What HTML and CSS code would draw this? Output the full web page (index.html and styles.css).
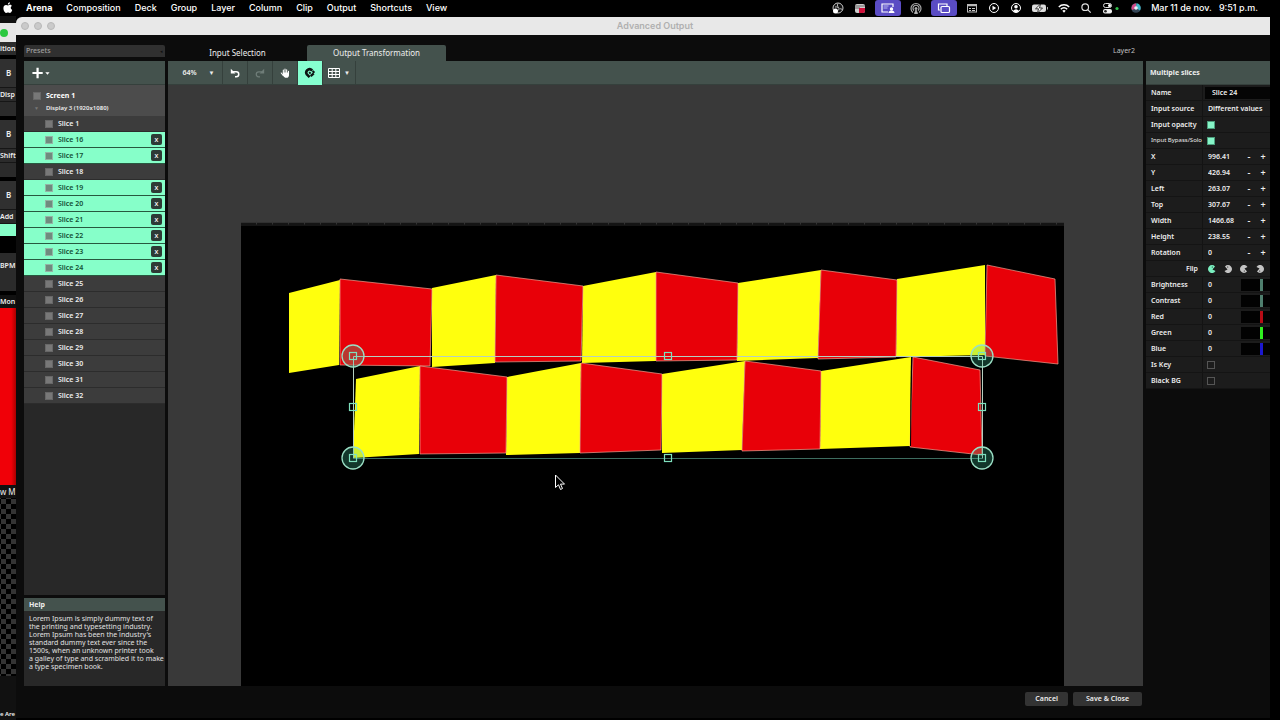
FILE: index.html
```html
<!DOCTYPE html>
<html lang="en">
<head>
    <meta charset="UTF-8">
    <meta name="viewport" content="width=device-width, initial-scale=1.0">
    <title>Advanced Output</title>
    <link rel="stylesheet" href="styles.css">
</head>
<body>
    <header class="menubar">
        <svg class="apple" viewBox="0 0 10 12" aria-hidden="true"><path fill="#fff" d="M6.9.2c.1 1.2-.9 2.4-2 2.4C4.700 1.500 5.800.4 6.900.2zM8.700 4c-1.500 1-1.300 3.100.5 3.900C8.700 9.500 7.700 11 6.700 11c-.7 0-.9-.4-1.700-.4s-1 .4-1.700.4C1.900 11 .4 8.300.4 6.200c0-2.200 1.300-3.300 2.600-3.300.9 0 1.500.5 2.100.5.500 0 1.200-.6 2.200-.6.700 0 1.300.4 1.400 1.200z"/></svg>
        <nav class="menus">
            <a href="#" class="app">Arena</a>
            <a href="#">Composition</a>
            <a href="#">Deck</a>
            <a href="#">Group</a>
            <a href="#">Layer</a>
            <a href="#">Column</a>
            <a href="#">Clip</a>
            <a href="#">Output</a>
            <a href="#">Shortcuts</a>
            <a href="#">View</a>
        </nav>
        <div class="status">
            <svg viewBox="0 0 14 14"><circle cx="7" cy="7" r="5" fill="#111" stroke="#ccc"/><path d="M7 2.500c-1.500 2 0 3.500 1 4.500M11.500 8.500C9 7 7.500 8 7 9.500M4 6c2-.5 3 .5 3.500 1.500" fill="none" stroke="#bbb"/><circle cx="4.500" cy="10" r="2.500" fill="#fff"/></svg>
            <svg viewBox="0 0 14 14"><rect x="2" y="3" width="10" height="9" rx="2" fill="#ccc"/><path d="M2 5h10M2 7h5" stroke="#666"/><path d="M6 7h6v3q0 2-2 2H6z" fill="#d0103a"/></svg>
            <span class="pill"><svg viewBox="0 0 14 14"><path d="M7 11H1V3h11v3" fill="none" stroke="#fff" stroke-width="1.200"/><path d="M2.500 5h5M2.500 7h4" stroke="#b9b4f0"/><circle cx="10.500" cy="8" r="1.700" fill="#fff"/><path d="M7.500 12q0-2.500 3-2.500t3 2.500z" fill="#fff"/></svg></span>
            <svg viewBox="0 0 14 14" fill="none" stroke="#aaa"><path d="M4 11.500a5 5 0 1 1 6 0M5 9.500a3 3 0 1 1 4 0" stroke-width="1.200"/><circle cx="7" cy="7.500" r="1" fill="#ccc"/><path d="M5.500 12.500 7 9l1.500 3.500z" fill="#bbb"/></svg>
            <span class="pill"><svg viewBox="0 0 14 14" fill="none" stroke="#fff" stroke-width="1.200"><path d="M3 9H1.500V3H10v2"/><rect x="4" y="5.500" width="8.500" height="6" rx="1"/></svg></span>
            <svg viewBox="0 0 14 14"><rect x="2.500" y="3.500" width="9" height="7.500" fill="none" stroke="#bbb"/><path d="M2.500 4.500h9" stroke="#bbb" stroke-width="1.500"/><path d="M4 7.500h2M7 7.500h3M4 9.500h2M7 9.500h3" stroke="#ccc"/></svg>
            <svg viewBox="0 0 14 14"><circle cx="7" cy="7" r="4.500" fill="none" stroke="#fff"/><path d="M5.500 4.800v4.400L9.200 7z" fill="#fff"/></svg>
            <svg viewBox="0 0 14 14"><circle cx="7" cy="7" r="4.500" fill="none" stroke="#fff"/><circle cx="7" cy="5.700" r="1.800" fill="#fff"/><path d="M3.800 10q3.200-3.500 6.400 0-3.200 2.700-6.400 0z" fill="#fff"/></svg>
            <svg class="battery" viewBox="0 0 18 14"><rect x="1" y="3.500" width="14" height="7.500" rx="2" fill="#ddd"/><path d="M16.500 6v2.500" stroke="#aaa"/><path d="M9.500 3 4.500 7.800h3L6.500 12l5-5h-3z" fill="#fff" stroke="#111" stroke-width=".8"/></svg>
            <svg viewBox="0 0 14 14" fill="none" stroke="#fff" stroke-width="1.500"><path d="M1.800 6a7.300 7.300 0 0 1 10.400 0M3.800 8.200a4.500 4.500 0 0 1 6.400 0"/><path d="m5.300 9.700 1.700 2 1.700-2q-1.700-1.200-3.400 0z" fill="#fff" stroke="none"/></svg>
            <svg viewBox="0 0 14 14" fill="none" stroke="#ddd" stroke-width="1.200"><circle cx="6.200" cy="6.200" r="3.300"/><path d="m8.700 8.700 3 3"/></svg>
            <svg class="control" viewBox="0 0 20 14"><rect x="2.500" y="2.500" width="8" height="4" rx="2" fill="none" stroke="#ddd"/><circle cx="8.500" cy="4.500" r="1.500" fill="#fff"/><rect x="2" y="8" width="9" height="4.500" rx="2" fill="#eee"/><circle cx="4.500" cy="10.200" r="1.300" fill="#222"/><circle cx="16" cy="7.500" r="1.600" fill="#2fbf4a"/></svg>
            <svg viewBox="0 0 14 14"><circle cx="7" cy="7" r="4.800" fill="#345"/><path d="M3 9a4.800 4.800 0 0 1 4-6.800L8 7z" fill="#d24a88"/><path d="M7.500 2.300A4.800 4.800 0 0 1 11 9.500L7 7z" fill="#3fb8c8"/><circle cx="7" cy="7" r="1.800" fill="#e8eef8"/></svg>
            <time>Mar 11 de nov.&nbsp;&nbsp; 9:51 p.m.</time>
        </div>
    </header>

    <div class="desktop">
        <aside class="behind">
            <div class="behind-title"><i class="green-light"></i></div>
            <div class="strip strip-tab">ition</div>
            <div class="strip strip-b">B</div>
            <div class="strip strip-name">Disp</div>
            <div class="strip strip-foot"></div>
            <div class="strip strip-b">B</div>
            <div class="strip strip-name">Shift</div>
            <div class="strip strip-foot"></div>
            <div class="strip strip-b">B</div>
            <div class="strip strip-name">Add</div>
            <div class="strip-mint"></div>
            <div class="strip strip-bpm">BPM</div>
            <div class="strip strip-foot wide"></div>
            <div class="strip strip-mon">Mon</div>
            <div class="strip-red"></div>
            <div class="strip strip-mon thin">w M</div>
            <div class="strip-checker"></div>
            <div class="strip strip-end">e Are</div>
        </aside>

        <main class="window">
            <div class="titlebar">
                <span class="lights"><i></i><i></i><i></i></span>
                <h1>Advanced Output</h1>
            </div>

            <div class="panes">
                <section class="side">
                    <button class="presets">Presets<span>◂</span></button>
                    <div class="bar">
                        <button class="add" aria-label="Add screen">
                            <svg viewBox="0 0 22 14"><path d="M7 1v12M1 7h12" stroke="#fff" stroke-width="2.600"/><path d="M16 6h5l-2.500 3z" fill="#fff"/></svg>
                        </button>
                    </div>
                    <div class="tree">
                        <div class="screen">
                            <label><input type="checkbox" class="mute"> Screen 1</label>
                            <button class="display"><span>▼</span>Display 3 (1920x1080)</button>
                        </div>
                        <ul class="slices">
                            <li><label><input type="checkbox" class="mute">Slice 1</label></li>
                            <li class="on"><label><input type="checkbox" class="mute">Slice 16</label><button>X</button></li>
                            <li class="on"><label><input type="checkbox" class="mute">Slice 17</label><button>X</button></li>
                            <li><label><input type="checkbox" class="mute">Slice 18</label></li>
                            <li class="on"><label><input type="checkbox" class="mute">Slice 19</label><button>X</button></li>
                            <li class="on"><label><input type="checkbox" class="mute">Slice 20</label><button>X</button></li>
                            <li class="on"><label><input type="checkbox" class="mute">Slice 21</label><button>X</button></li>
                            <li class="on"><label><input type="checkbox" class="mute">Slice 22</label><button>X</button></li>
                            <li class="on"><label><input type="checkbox" class="mute">Slice 23</label><button>X</button></li>
                            <li class="on"><label><input type="checkbox" class="mute">Slice 24</label><button>X</button></li>
                            <li><label><input type="checkbox" class="mute">Slice 25</label></li>
                            <li><label><input type="checkbox" class="mute">Slice 26</label></li>
                            <li><label><input type="checkbox" class="mute">Slice 27</label></li>
                            <li><label><input type="checkbox" class="mute">Slice 28</label></li>
                            <li><label><input type="checkbox" class="mute">Slice 29</label></li>
                            <li><label><input type="checkbox" class="mute">Slice 30</label></li>
                            <li><label><input type="checkbox" class="mute">Slice 31</label></li>
                            <li><label><input type="checkbox" class="mute">Slice 32</label></li>
                        </ul>
                    </div>
                    <div class="help">
                        <h2>Help</h2>
                        <p>Lorem Ipsum is simply dummy text of<br>the printing and typesetting industry.<br>Lorem Ipsum has been the industry's<br>standard dummy text ever since the<br>1500s, when an unknown printer took<br>a galley of type and scrambled it to make<br>a type specimen book.</p>
                    </div>
                </section>

                <section class="center">
                    <div class="tabs">
                        <button>Input Selection</button>
                        <button class="active">Output Transformation</button>
                        <span class="layer">Layer2</span>
                    </div>
                    <div class="bar toolbar">
                        <button class="zoom">64%<span>▼</span></button>
                        <button aria-label="Undo"><svg viewBox="0 0 12 12"><path d="M2 4.500h5.500a3 3 0 0 1 0 6H6" fill="none" stroke="#fff" stroke-width="1.800"/><path d="M1 1v5.500h5.500z" fill="#fff"/></svg></button>
                        <button aria-label="Redo"><svg viewBox="0 0 12 12"><path d="M10 4.500H4.500a3 3 0 0 0 0 6H6" fill="none" stroke="#6f7d78" stroke-width="1.500"/><path d="M11 1v5.500H5.500z" fill="#6f7d78"/></svg></button>
                        <button aria-label="Pan"><svg viewBox="0 0 12 12"><path d="M4 6V2.500M6 6V1.200M8 6V2M10.200 7V4M3.800 9 1.500 6" stroke="#fff" stroke-width="1.300" stroke-linecap="round"/><path d="M3.400 5.500h7.400V8q0 3.700-3 3.700H6.200Q4.500 11 3.300 8.500z" fill="#fff"/></svg></button>
                        <button class="snap" aria-label="Snap"><svg viewBox="0 0 12 12"><path d="M5.600 10.200 2.900 7.500A3.300 3.300 0 0 1 7.500 2.900L8.300 3.700" fill="none" stroke="#0d1512" stroke-width="2.600"/><path d="m8.600 4 1.800 1.800M5.200 6.600 6.600 5.300" stroke="#0d1512" stroke-width="2"/><path d="m6.700 9.100 3-2.700" stroke="#0d1512" stroke-width="2.400"/></svg></button>
                        <button class="grid-tool" aria-label="Grid"><svg viewBox="0 0 12 12"><path d="M.5 1.500h11v9H.5zM.5 4.500h11M.5 7.500h11M4.200 1.500v9M7.800 1.500v9" fill="none" stroke="#fff"/></svg><span>▼</span></button>
                    </div>
                    <svg class="stage" viewBox="168 85 975 601" preserveAspectRatio="xMidYMin slice">
                        <rect x="241" y="224" width="823" height="470" fill="#000"/>
                        <path d="M241 222.500h823" stroke="#303030"/>
                        <path d="M241 224.500h823" stroke="#141414" stroke-width="3"/>
                        <path d="M256 223h808" stroke="#343434" stroke-width="3" stroke-dasharray="1 15"/>
                        <g fill="#ffff0d">
                            <path d="M289 293 340 280 339 365 289 373z"/>
                            <path d="M432 288 496 275 495 363 432 367z"/>
                            <path d="M583 286 656 272 656 361 582 363z"/>
                            <path d="M738 283 821 270 818 358 737 361z"/>
                            <path d="M897 279 985 265 985 355 896 357z"/>
                            <path d="M356 379 420 366 419 454 353 458z"/>
                            <path d="M507 377 581 363 580 453 506 455z"/>
                            <path d="M662 374 745 361 742 450 662 453z"/>
                            <path d="M821 371 911 357 910 446 820 449z"/>
                        </g>
                        <g fill="#e80008" stroke="#f2a090" stroke-width=".7">
                            <path d="M340 279 432 289 430 366 340 365z"/>
                            <path d="M496 275 583 286 581 361 495 362z"/>
                            <path d="M656 272 738 283 737 360 656 361z"/>
                            <path d="M821 270 897 280 896 357 818 359z"/>
                            <path d="M987 265 1055 279 1058 364 985 356z"/>
                            <path d="M420 366 507 377 506 453 420 454z"/>
                            <path d="M581 363 662 374 661 450 580 453z"/>
                            <path d="M745 361 821 371 820 449 742 451z"/>
                            <path d="M913 357 980 370 982 455 910 447z"/>
                        </g>
                        <path d="M911.500 357.500 910.500 446" stroke="#000"/>
                        <path d="M353.500 458.500v-102h629v102" fill="none" stroke="#b5cfc0"/>
                        <path d="M353.500 458.500h629" stroke="#3d6d60"/>
                        <g fill="#41c79a" fill-opacity=".28" stroke="#9adfc5" stroke-width="1.300">
                            <circle cx="353" cy="356" r="11"/>
                            <circle cx="982" cy="356" r="11"/>
                            <circle cx="353" cy="458" r="11"/>
                            <circle cx="982" cy="458" r="11"/>
                        </g>
                        <g fill="none" stroke="#7ee0bd" stroke-width="1.200">
                            <rect x="349.500" y="352.500" width="7" height="7"/>
                            <rect x="664.500" y="352.500" width="7" height="7"/>
                            <rect x="978.500" y="352.500" width="7" height="7"/>
                            <rect x="349.500" y="403.500" width="7" height="7"/>
                            <rect x="978.500" y="403.500" width="7" height="7"/>
                            <rect x="349.500" y="454.500" width="7" height="7"/>
                            <rect x="664.500" y="454.500" width="7" height="7"/>
                            <rect x="978.500" y="454.500" width="7" height="7"/>
                        </g>
                        <path d="M555.500 475v12.500l3-2.700 2 4.700 2-1-2-4.400h4z" fill="#000" stroke="#fff"/>
                    </svg>
                    <footer class="actions">
                        <button>Cancel</button>
                        <button>Save &amp; Close</button>
                    </footer>
                </section>

                <section class="props">
                    <h2 class="bar">Multiple slices</h2>
                    <form>
                        <div class="row"><label for="name">Name</label><input type="text" id="name" value="Slice 24" class="name"></div>
                        <div class="row"><label for="source">Input source</label><select id="source"><option>Different values</option></select></div>
                        <div class="row"><label for="opacity">Input opacity</label><input type="checkbox" id="opacity" class="box" checked></div>
                        <div class="row"><label for="bypass" class="tight">Input Bypass/Solo</label><input type="checkbox" id="bypass" class="box" checked></div>
                        <div class="row num"><label for="x">X</label><input type="text" id="x" value="996.41"><button type="button">-</button><button type="button">+</button></div>
                        <div class="row num"><label for="y">Y</label><input type="text" id="y" value="426.94"><button type="button">-</button><button type="button">+</button></div>
                        <div class="row num"><label for="left">Left</label><input type="text" id="left" value="263.07"><button type="button">-</button><button type="button">+</button></div>
                        <div class="row num"><label for="top">Top</label><input type="text" id="top" value="307.67"><button type="button">-</button><button type="button">+</button></div>
                        <div class="row num"><label for="width">Width</label><input type="text" id="width" value="1466.68"><button type="button">-</button><button type="button">+</button></div>
                        <div class="row num"><label for="height">Height</label><input type="text" id="height" value="238.55"><button type="button">-</button><button type="button">+</button></div>
                        <div class="row num"><label for="rotation">Rotation</label><input type="text" id="rotation" value="0"><button type="button">-</button><button type="button">+</button></div>
                        <div class="row flip">
                            <span class="flip-label">Flip</span>
                            <div class="flips">
                                <button type="button" class="on" aria-label="No flip"><svg viewBox="0 0 8 8"><path d="M7 1.400A4 4 0 1 0 7.500 6L4.500 4.600z"/><circle cx="4.300" cy="2" r=".6" fill="#1b1b1b"/></svg></button>
                                <button type="button" aria-label="Flip horizontal"><svg viewBox="0 0 8 8"><path d="M1 1.400A4 4 0 1 1 .5 6l3-1.400z"/><circle cx="3.700" cy="2" r=".6" fill="#1b1b1b"/></svg></button>
                                <button type="button" aria-label="Flip vertical"><svg viewBox="0 0 8 8"><path d="M7 6.600A4 4 0 1 1 7.500 2l-3 1.400z"/><circle cx="4.300" cy="6" r=".6" fill="#1b1b1b"/></svg></button>
                                <button type="button" aria-label="Flip both"><svg viewBox="0 0 8 8"><path d="M1 6.600A4 4 0 1 0 .5 2l3 1.400z"/><circle cx="3.700" cy="6" r=".6" fill="#1b1b1b"/></svg></button>
                            </div>
                        </div>
                        <div class="row slide"><label for="brightness">Brightness</label><output>0</output><input type="range" id="brightness" value="74"></div>
                        <div class="row slide"><label for="contrast">Contrast</label><output>0</output><input type="range" id="contrast" value="74"></div>
                        <div class="row slide red"><label for="red">Red</label><output>0</output><input type="range" id="red" value="74"></div>
                        <div class="row slide green"><label for="green">Green</label><output>0</output><input type="range" id="green" value="74"></div>
                        <div class="row slide blue"><label for="blue">Blue</label><output>0</output><input type="range" id="blue" value="74"></div>
                        <div class="row"><label for="key">Is Key</label><input type="checkbox" id="key" class="box"></div>
                        <div class="row"><label for="blackbg">Black BG</label><input type="checkbox" id="blackbg" class="box"></div>
                    </form>
                </section>
            </div>
        </main>
    </div>
</body>
</html>
```
FILE: styles.css
```css
* {
    margin: 0;
    padding: 0;
    box-sizing: border-box;
}

body {
    background: #000;
    color: #eee;
    height: 100vh;
    display: flex;
    flex-direction: column;
    overflow: hidden;
    font-family: "Noto Sans", "Open Sans", sans-serif;
    font-size: 7px;
    line-height: 8px;
    font-weight: 600;
}

button, input, select {
    font: inherit;
    color: inherit;
    background: none;
    border: none;
    border-radius: 0;
    appearance: none;
    min-width: 0;
}

h1, h2 {
    font-size: inherit;
}

/* Menu bar */
.menubar {
    height: 16px;
    display: flex;
    align-items: center;
    padding: 0 22px 0 3px;
    font-family: Inter, sans-serif;
    font-size: 9px;
    line-height: 16px;
    font-weight: 500;
    color: #fff;
}

.apple {
    width: 10px;
    height: 12px;
    margin-right: 13px;
}

.menus {
    display: flex;
    gap: 14px;
}

.menus a {
    color: inherit;
    text-decoration: none;
}

.menus .app {
    font-weight: 700;
}

.status {
    margin-left: auto;
    display: flex;
    align-items: center;
    gap: 8px;
}

.status svg {
    display: block;
    width: 14px;
    height: 14px;
}

.status .battery {
    width: 18px;
}

.status .control {
    width: 20px;
}

.pill {
    background: #5a4cc4;
    border-radius: 3px;
    padding: 1px 6px;
}

.status time {
    white-space: nowrap;
}

/* Application window behind */
.desktop {
    flex: 1;
    min-height: 0;
    display: flex;
    padding-right: 10px;
}

.behind {
    width: 16px;
    overflow: hidden;
    padding-top: 7px;
    background: #111;
    white-space: nowrap;
    display: flex;
    flex-direction: column;
}

.behind > * {
    flex: none;
}

.behind-title {
    height: 19px;
    background: #e6e6e6;
    display: flex;
    align-items: center;
}

.green-light {
    width: 8px;
    height: 8px;
    border-radius: 50%;
    background: #2bc840;
}

.strip {
    background: #2b2b2b;
    line-height: 13px;
}

.strip-tab {
    height: 17px;
    border-bottom: 4px solid #000;
}

.strip-b {
    height: 29px;
    line-height: 28px;
    padding-left: 6px;
    font-size: 8px;
    background: #303030;
    border-bottom: 1px solid #161616;
}

.strip-name {
    height: 14px;
    border-bottom: 1px solid #161616;
}

.strip-foot {
    height: 18px;
    border-bottom: 4px solid #000;
}

.strip-mint {
    height: 29px;
    border-bottom: 17px solid #000;
    background: #86ffc9;
}

.strip-bpm {
    height: 26px;
    line-height: 26px;
}

.strip-foot.wide {
    height: 16px;
}

.strip-mon {
    height: 13px;
    background: #111;
}

.strip-red {
    height: 177px;
    background: linear-gradient(to right, #f00008 70%, #a00);
}

.thin {
    font-size: 8px;
    font-weight: 400;
}

.strip-checker {
    height: 178px;
    background: repeating-conic-gradient(#000 0 25%, #343434 0 50%) 1px 1px / 10px 10px;
}

.strip-end {
    margin-top: 34px;
    background: #111;
    font-size: 6px;
    line-height: 8px;
}

/* Window */
.window {
    flex: 1;
    min-width: 0;
    margin: 1px 0 2px;
    display: flex;
    flex-direction: column;
    background: #0c0c0c;
    border-top-left-radius: 6px;
    overflow: hidden;
}

.titlebar {
    height: 18px;
    display: grid;
    grid-template-columns: 1fr auto 1fr;
    align-items: center;
    background: #e8e8e8;
}

.titlebar h1 {
    padding-left: 24px;
    font-family: Inter, sans-serif;
    font-size: 9px;
    line-height: 18px;
    font-weight: 600;
    color: #b0b0b0;
}

.lights {
    display: flex;
    gap: 5px;
    padding-left: 5px;
}

.lights i {
    width: 8px;
    height: 8px;
    border-radius: 50%;
    background: #cacaca;
    border: 1px solid #b8b8b8;
}

.panes {
    flex: 1;
    min-height: 0;
    display: grid;
    grid-template-columns: 141px 1fr 124px;
    gap: 3px;
    padding: 10px 0 0 8px;
}

.bar {
    height: 24px;
    background: #44524d;
    display: flex;
    align-items: center;
    border-bottom: 1px solid #35403c;
    flex: none;
}

/* Left column */
.side {
    display: flex;
    flex-direction: column;
    min-height: 0;
    padding-bottom: 32px;
}

.presets {
    display: flex;
    justify-content: space-between;
    height: 12px;
    line-height: 12px;
    margin-bottom: 4px;
    padding: 0 2px;
    background: #303030;
    border-radius: 2px 2px 0 0;
    font-weight: 500;
    color: #a0a0a0;
}

.presets span {
    font-size: 5px;
    color: #111;
}

.add {
    padding-left: 6px;
}

.add svg {
    display: block;
    width: 22px;
    height: 12px;
}

.tree {
    flex: 1;
    min-height: 0;
    background: #282828;
    overflow: hidden;
}

.screen {
    height: 31px;
    padding: 5px 9px 0;
    background: #4c4c4c;
}

.screen label {
    display: flex;
    align-items: center;
    gap: 5px;
    line-height: 12px;
    font-weight: 700;
    color: #fff;
}

.display {
    display: flex;
    gap: 7px;
    padding-left: 1px;
    line-height: 12px;
    font-size: 6px;
}

.display span {
    color: #777;
    font-size: 5px;
}

.mute {
    width: 8px;
    height: 8px;
    background: #787878;
    border: 1px solid #676767;
}

.slices {
    list-style: none;
}

.slices li {
    height: 16px;
    display: flex;
    align-items: center;
    justify-content: space-between;
    padding: 0 3px 0 21px;
    background: #3c3c3c;
    border-bottom: 1px solid #2c2c2c;
}

.slices label {
    display: flex;
    align-items: center;
    gap: 5px;
}

.slices .on {
    background: #86ffc9;
    border-bottom-color: #27583f;
    color: #145036;
}

.slices .on .mute {
    background: #6f8b7e;
    border-color: #93b5a5;
}

.slices button {
    width: 11px;
    height: 11px;
    border-radius: 2px;
    background: #2e3a35;
    color: #fff;
    font-size: 6px;
    line-height: 10px;
    text-align: center;
}

.help {
    margin-top: 3px;
    height: 88px;
    background: #282828;
}

.help h2 {
    height: 13px;
    line-height: 13px;
    padding-left: 5px;
    background: #44524d;
}

.help p {
    padding: 4px 0 0 5px;
    font-weight: 400;
    color: #e0e0e0;
    white-space: nowrap;
}

/* Output area */
.center {
    display: flex;
    flex-direction: column;
    min-width: 0;
    min-height: 0;
}

.tabs {
    display: flex;
    height: 16px;
    flex: none;
}

.tabs button {
    width: 139px;
    height: 15px;
    font-size: 8px;
    font-weight: 400;
}

.tabs .active {
    height: 16px;
    background: #44524d;
    border-radius: 2px 2px 0 0;
}

.layer {
    margin-left: auto;
    padding-right: 8px;
    line-height: 12px;
    font-weight: 400;
    color: #c0c0c0;
}

.toolbar button {
    width: 25px;
    height: 23px;
    display: flex;
    align-items: center;
    justify-content: center;
    border-right: 1px solid #35403c;
}

.toolbar svg {
    width: 10px;
    height: 10px;
}

.toolbar span {
    font-size: 6px;
}

.toolbar .zoom {
    width: 55px;
    gap: 12px;
    padding-left: 7px;
}

.toolbar .snap {
    height: 24px;
    background: #86ffd0;
}

.toolbar .snap svg,
.toolbar .grid-tool svg {
    width: 12px;
    height: 12px;
}

.toolbar .grid-tool {
    width: 33px;
    gap: 4px;
}

.stage {
    flex: 1;
    min-height: 0;
    width: 100%;
    background: #393939;
}

.actions {
    height: 32px;
    flex: none;
    display: flex;
    justify-content: flex-end;
    align-items: flex-start;
    gap: 5px;
    padding: 6px 1px 0 0;
}

.actions button {
    height: 14px;
    padding: 0 10px;
    background: #333;
    border-radius: 2px;
}

.actions button:last-child {
    padding: 0 13px;
}

/* Properties */
.props {
    padding-top: 16px;
}

.props h2 {
    padding-left: 4px;
}

.row {
    display: grid;
    grid-template-columns: 57px 1fr;
    align-items: center;
    height: 16px;
    background: #1c1c1c;
    border-bottom: 1px solid #141414;
}

.row label {
    padding-left: 5px;
    line-height: 15px;
    border-right: 1px solid #131313;
    white-space: nowrap;
}

.row .tight {
    font-family: "Liberation Sans Narrow", "Noto Sans", sans-serif;
    font-size: 6px;
    font-weight: 400;
}

.row input, .row select, .row output {
    margin-left: 5px;
}

.row .name {
    height: 12px;
    margin-left: 2px;
    padding-left: 7px;
    background: #050505;
}

.row .box {
    width: 8px;
    height: 8px;
    margin-left: 4px;
    border: 1px solid #555;
}

.row .box:checked {
    background: #86f5c8;
    border-color: #4c9c7c;
}

.num {
    grid-template-columns: 57px 1fr 14px 14px;
}

.num button {
    font-size: 9px;
    text-align: center;
}

.flip-label {
    text-align: right;
    padding-right: 5px;
}

.flips {
    display: flex;
    gap: 8px;
    padding-left: 5px;
}

.flips button {
    width: 8px;
    height: 8px;
    fill: #c4c4c4;
}

.flips .on {
    fill: #7af0c0;
}

.flips svg {
    display: block;
    width: 8px;
    height: 8px;
}

.slide {
    grid-template-columns: 57px 1fr 29px;
    --thumb: #4f7f6e;
}

.row input[type="range"] {
    width: 29px;
    height: 12px;
    margin-left: 0;
    background: #020202;
}

.slide input::-webkit-slider-thumb {
    appearance: none;
    width: 3px;
    height: 12px;
    background: var(--thumb);
}

.red {
    --thumb: #b80c16;
}

.green {
    --thumb: #30f020;
}

.blue {
    --thumb: #1c18d0;
}
```
